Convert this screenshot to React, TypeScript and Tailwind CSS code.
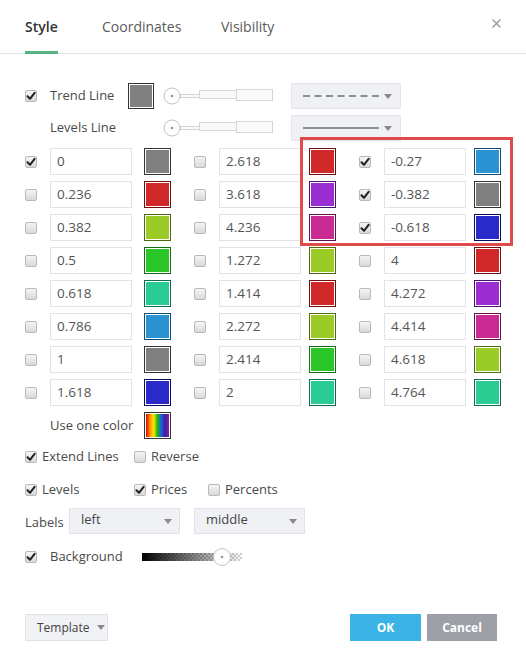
import React from "react";

type Sw = { bg: string; bd: string };
const GRAY: Sw = { bg: "bg-[#808080]", bd: "border-[#333333]" };
const RED: Sw = { bg: "bg-[#d02828]", bd: "border-[#6e0d0d]" };
const YG: Sw = { bg: "bg-[#9acb27]", bd: "border-[#4f6b10]" };
const GREEN: Sw = { bg: "bg-[#2ac62a]", bd: "border-[#146d14]" };
const TEAL: Sw = { bg: "bg-[#2bcb94]", bd: "border-[#0f6b4c]" };
const BLUE: Sw = { bg: "bg-[#2a94d2]", bd: "border-[#0f4d75]" };
const DBLUE: Sw = { bg: "bg-[#2a2ac9]", bd: "border-[#0c0c5e]" };
const PURPLE: Sw = { bg: "bg-[#9a2ed0]", bd: "border-[#4b1168]" };
const MAG: Sw = { bg: "bg-[#c92a94]", bd: "border-[#65104a]" };

type Cell = { v: string; c: boolean; s: Sw };
const rows: Cell[][] = [
  [
    { v: "0", c: true, s: GRAY },
    { v: "2.618", c: false, s: RED },
    { v: "-0.27", c: true, s: BLUE },
  ],
  [
    { v: "0.236", c: false, s: RED },
    { v: "3.618", c: false, s: PURPLE },
    { v: "-0.382", c: true, s: GRAY },
  ],
  [
    { v: "0.382", c: false, s: YG },
    { v: "4.236", c: false, s: MAG },
    { v: "-0.618", c: true, s: DBLUE },
  ],
  [
    { v: "0.5", c: false, s: GREEN },
    { v: "1.272", c: false, s: YG },
    { v: "4", c: false, s: RED },
  ],
  [
    { v: "0.618", c: false, s: TEAL },
    { v: "1.414", c: false, s: RED },
    { v: "4.272", c: false, s: PURPLE },
  ],
  [
    { v: "0.786", c: false, s: BLUE },
    { v: "2.272", c: false, s: YG },
    { v: "4.414", c: false, s: MAG },
  ],
  [
    { v: "1", c: false, s: GRAY },
    { v: "2.414", c: false, s: GREEN },
    { v: "4.618", c: false, s: YG },
  ],
  [
    { v: "1.618", c: false, s: DBLUE },
    { v: "2", c: false, s: TEAL },
    { v: "4.764", c: false, s: TEAL },
  ],
];

function Check({ checked }: { checked: boolean }) {
  return (
    <span className="w-[12px] h-[12px] shrink-0 rounded-[2px] border border-[#b9b9b9] bg-gradient-to-b from-[#f5f5f5] to-[#d9d9d9] flex items-center justify-center">
      {checked && (
        <svg width="10" height="10" viewBox="0 0 10 10">
          <path d="M1.5 5.2 L4 7.8 L8.6 1.8" fill="none" stroke="#222" strokeWidth="2" strokeLinecap="round" strokeLinejoin="round" />
        </svg>
      )}
    </span>
  );
}

function Swatch({ s, cls }: { s: Sw; cls: string }) {
  return (
    <div className={`w-[27px] h-[27px] shrink-0 border ${s.bd} bg-white p-px ${cls}`}>
      <div className={`w-full h-full ${s.bg}`} />
    </div>
  );
}

function Caret() {
  return (
    <svg width="8" height="5" viewBox="0 0 8 5">
      <path d="M0 0 L8 0 L4 5 Z" fill="#8a8a8a" />
    </svg>
  );
}

function WidthSlider() {
  return (
    <svg width="112" height="20" viewBox="0 0 112 20" className="shrink-0">
      <rect x="17" y="8.5" width="20" height="3" fill="#fafafa" stroke="#d2d2d2" strokeWidth="1" />
      <rect x="36.5" y="4.5" width="37" height="8" fill="#fafafa" stroke="#d6d6d6" strokeWidth="1" />
      <rect x="73.5" y="3.5" width="36" height="11" fill="#fafafa" stroke="#d6d6d6" strokeWidth="1" />
      <circle cx="9" cy="10" r="8" fill="#fff" stroke="#c4c4c4" strokeWidth="1" />
      <circle cx="9" cy="10" r="1.3" fill="#9a9a9a" />
    </svg>
  );
}

function LineSelect({ dashed }: { dashed: boolean }) {
  return (
    <div className="w-[110px] h-[26px] shrink-0 bg-[#eff1f4] border border-[#e2e5ea] flex items-center pl-[11px] pr-[8px]">
      <svg width="76" height="4" viewBox="0 0 76 4">
        {dashed ? (
          <line x1="0" y1="2" x2="76" y2="2" stroke="#6e6e6e" strokeWidth="1.6" strokeDasharray="7 4.5" />
        ) : (
          <line x1="0" y1="2" x2="78" y2="2" stroke="#6e6e6e" strokeWidth="1.6" />
        )}
      </svg>
      <div className="ml-auto flex items-center">
        <Caret />
      </div>
    </div>
  );
}

function BgSlider() {
  return (
    <svg width="104" height="20" viewBox="0 0 104 20" className="shrink-0">
      <defs>
        <pattern id="chk" width="4" height="4" patternUnits="userSpaceOnUse">
          <rect width="4" height="4" fill="#ffffff" />
          <rect width="2" height="2" fill="#cfcfcf" />
          <rect x="2" y="2" width="2" height="2" fill="#cfcfcf" />
        </pattern>
        <linearGradient id="bgg" x1="0" x2="1" y1="0" y2="0">
          <stop offset="0" stopColor="#000" stopOpacity="1" />
          <stop offset="1" stopColor="#000" stopOpacity="0" />
        </linearGradient>
      </defs>
      <rect x="0" y="6" width="100" height="8" fill="url(#chk)" />
      <rect x="0" y="6" width="100" height="8" fill="url(#bgg)" />
      <circle cx="80" cy="10" r="8.5" fill="#fff" stroke="#c4c4c4" strokeWidth="1" />
      <circle cx="80" cy="10" r="1.3" fill="#9a9a9a" />
    </svg>
  );
}

function DropSelect({ label, cls }: { label: string; cls: string }) {
  return (
    <div className={`w-[111px] h-[26px] bg-[#eff1f4] border border-[#e0e3e8] flex items-center pl-[11px] pr-[7px] ${cls}`}>
      <span className="text-[13px] text-[#444] -mt-[2px]">{label}</span>
      <div className="ml-auto">
        <Caret />
      </div>
    </div>
  );
}

export default function App() {
  return (
    <div
      className="w-[526px] h-[667px] bg-white relative text-[#4a4a4a] text-[13px]"
      style={{ fontFamily: '"Open Sans", "DejaVu Sans", sans-serif' }}
    >
      {/* header */}
      <div className="h-[54px] border-b border-[#e3e5e9] flex pl-[25px] relative">
        <div className="w-[77px] flex">
          <div className="flex items-center border-b-[3px] border-[#52b383] -mb-px pt-[2px]">
            <span className="text-[14px] font-semibold text-[#333]">Style</span>
          </div>
        </div>
        <div className="w-[119px] flex items-center">
          <span className="text-[14px] text-[#5a5a5a]">Coordinates</span>
        </div>
        <div className="flex items-center">
          <span className="text-[14px] text-[#5a5a5a]">Visibility</span>
        </div>
        <div className="ml-auto mr-[25px] mt-[19px]">
          <svg width="9" height="9" viewBox="0 0 9 9">
            <path d="M0.5 0.5 L8.5 8.5 M8.5 0.5 L0.5 8.5" stroke="#9a9a9a" strokeWidth="1.4" />
          </svg>
        </div>
      </div>

      {/* Trend Line */}
      <div className="mt-[29px] h-[26px] flex items-center pl-[25px]">
        <Check checked />
        <span className="ml-[13px] w-[78px]">Trend Line</span>
        <div className="w-[26px] h-[26px] shrink-0 border border-[#333] bg-white p-px">
          <div className="w-full h-full bg-[#808080]" />
        </div>
        <div className="ml-[9px]">
          <WidthSlider />
        </div>
        <div className="ml-[16px]">
          <LineSelect dashed />
        </div>
      </div>

      {/* Levels Line */}
      <div className="mt-[6px] h-[26px] flex items-center pl-[50px]">
        <span className="w-[113px]">Levels Line</span>
        <WidthSlider />
        <div className="ml-[16px]">
          <LineSelect dashed={false} />
        </div>
      </div>

      {/* levels grid */}
      <div className="mt-[7px] flex flex-col gap-[6px]">
        {rows.map((r, i) => (
          <div key={i} className="h-[27px] flex items-center pl-[25px]">
            {r.map((c, j) => (
              <React.Fragment key={j}>
                <div className={j === 0 ? "" : "ml-[23px]"}>
                  <Check checked={c.c} />
                </div>
                <div className="ml-[13px] w-[82px] h-[27px] shrink-0 border border-[#e1e3e8] bg-white flex items-center pl-[6px] text-[#555] text-[13.5px]">
                  {c.v}
                </div>
                <Swatch s={c.s} cls={j === 0 ? "ml-[12px]" : "ml-[8px]"} />
              </React.Fragment>
            ))}
          </div>
        ))}
        <div className="h-[27px] flex items-center pl-[50px]">
          <span className="w-[94px]">Use one color</span>
          <div className="w-[27px] h-[27px] border border-[#333] bg-white p-px">
            <div className="w-full h-full bg-[linear-gradient(to_right,#e60000,#ff8c00,#ffe600,#19b419,#1e5adc,#3c1e96,#8c1eb4)]" />
          </div>
        </div>
      </div>

      {/* Extend Lines */}
      <div className="mt-[10px] h-[16px] flex items-center pl-[25px]">
        <div className="w-[109px] flex items-center">
          <Check checked />
          <span className="ml-[5px]">Extend Lines</span>
        </div>
        <Check checked={false} />
        <span className="ml-[5px]">Reverse</span>
      </div>

      {/* Levels / Prices / Percents */}
      <div className="mt-[17px] h-[16px] flex items-center pl-[25px]">
        <div className="w-[109px] flex items-center">
          <Check checked />
          <span className="ml-[5px]">Levels</span>
        </div>
        <div className="w-[74px] flex items-center">
          <Check checked />
          <span className="ml-[5px]">Prices</span>
        </div>
        <Check checked={false} />
        <span className="ml-[5px]">Percents</span>
      </div>

      {/* Labels */}
      <div className="mt-[10px] h-[26px] flex items-center pl-[25px]">
        <span className="w-[44px] mt-[4px]">Labels</span>
        <DropSelect label="left" cls="" />
        <DropSelect label="middle" cls="ml-[14px]" />
      </div>

      {/* Background */}
      <div className="mt-[15px] h-[16px] flex items-center pl-[25px]">
        <Check checked />
        <span className="ml-[13px] w-[92px]">Background</span>
        <BgSlider />
      </div>

      {/* footer */}
      <div className="mt-[49px] h-[27px] flex items-center pl-[25px] pr-[29px]">
        <div className="w-[83px] h-[27px] bg-[#f0f2f5] border border-[#dfe2e7] flex items-center pl-[11px] text-[12px] text-[#444]">
          <span>Template</span>
          <span className="ml-[7px]">
            <Caret />
          </span>
        </div>
        <div className="ml-auto w-[71px] h-[27px] bg-[#3bb3e4] flex items-center justify-center text-white text-[12px] font-bold">
          OK
        </div>
        <div className="ml-[6px] w-[70px] h-[27px] bg-[#9da0a7] flex items-center justify-center text-white text-[12px] font-bold">
          Cancel
        </div>
      </div>

      {/* highlight box */}
      <div className="absolute left-[300px] top-[137px] w-[213px] h-[109px] border-[3px] border-[#de4b4b] pointer-events-none" />
    </div>
  );
}
